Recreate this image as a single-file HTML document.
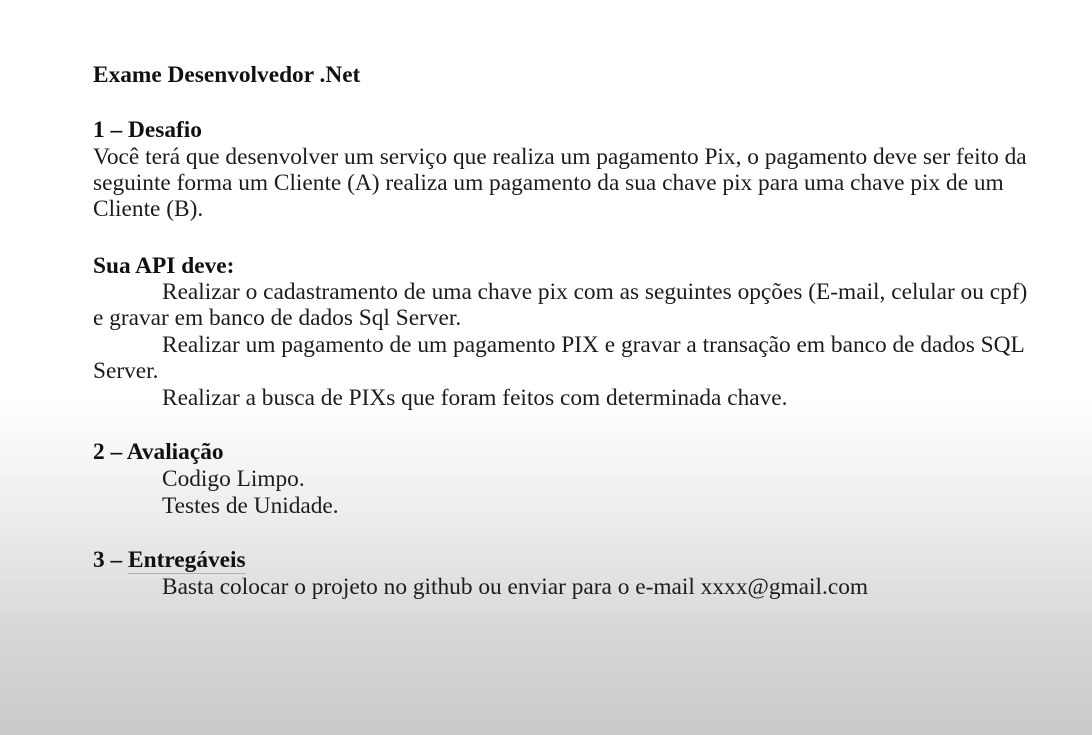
<!DOCTYPE html>
<html><head><meta charset="utf-8"><style>
html,body{margin:0;padding:0}
body{width:1092px;height:735px;overflow:hidden;position:relative;
background:linear-gradient(to bottom,#ffffff 0px,#ffffff 400px,#ececec 520px,#d6d6d6 640px,#c9c9c9 735px);
font-family:"Liberation Serif","Times New Roman",serif;font-size:23.35px;color:#1c1c1c}
.l{position:absolute;left:93px;line-height:24px;white-space:nowrap}
.i{left:162px}
b{font-weight:bold;color:#111}
.u{border-bottom:1px solid #9db7cf}
</style></head><body>
<div class="l" style="top:63px"><b>Exame Desenvolvedor .Net</b></div>
<div class="l" style="top:118px"><b>1 – Desafio</b></div>
<div class="l" style="top:145px">Você terá que desenvolver um serviço que realiza um pagamento Pix, o pagamento deve ser feito da</div>
<div class="l" style="top:171px">seguinte forma um Cliente (A) realiza um pagamento da sua chave pix para uma chave pix de um</div>
<div class="l" style="top:197px">Cliente (B).</div>
<div class="l" style="top:254px"><b>Sua API deve:</b></div>
<div class="l i" style="top:280px">Realizar o cadastramento de uma chave pix com as seguintes opções (E-mail, celular ou cpf)</div>
<div class="l" style="top:306px">e gravar em banco de dados Sql Server.</div>
<div class="l i" style="top:333px">Realizar um pagamento de um pagamento PIX e gravar a transação em banco de dados SQL</div>
<div class="l" style="top:359px">Server.</div>
<div class="l i" style="top:386px">Realizar a busca de PIXs que foram feitos com determinada chave.</div>
<div class="l" style="top:440px"><b>2 – Avaliação</b></div>
<div class="l i" style="top:467px">Codigo Limpo.</div>
<div class="l i" style="top:494px">Testes de Unidade.</div>
<div class="l" style="top:548px"><b>3 – <span class="u">Entregáveis</span></b></div>
<div class="l i" style="top:575px">Basta colocar o projeto no github ou enviar para o e-mail xxxx@gmail.com</div>
</body></html>
